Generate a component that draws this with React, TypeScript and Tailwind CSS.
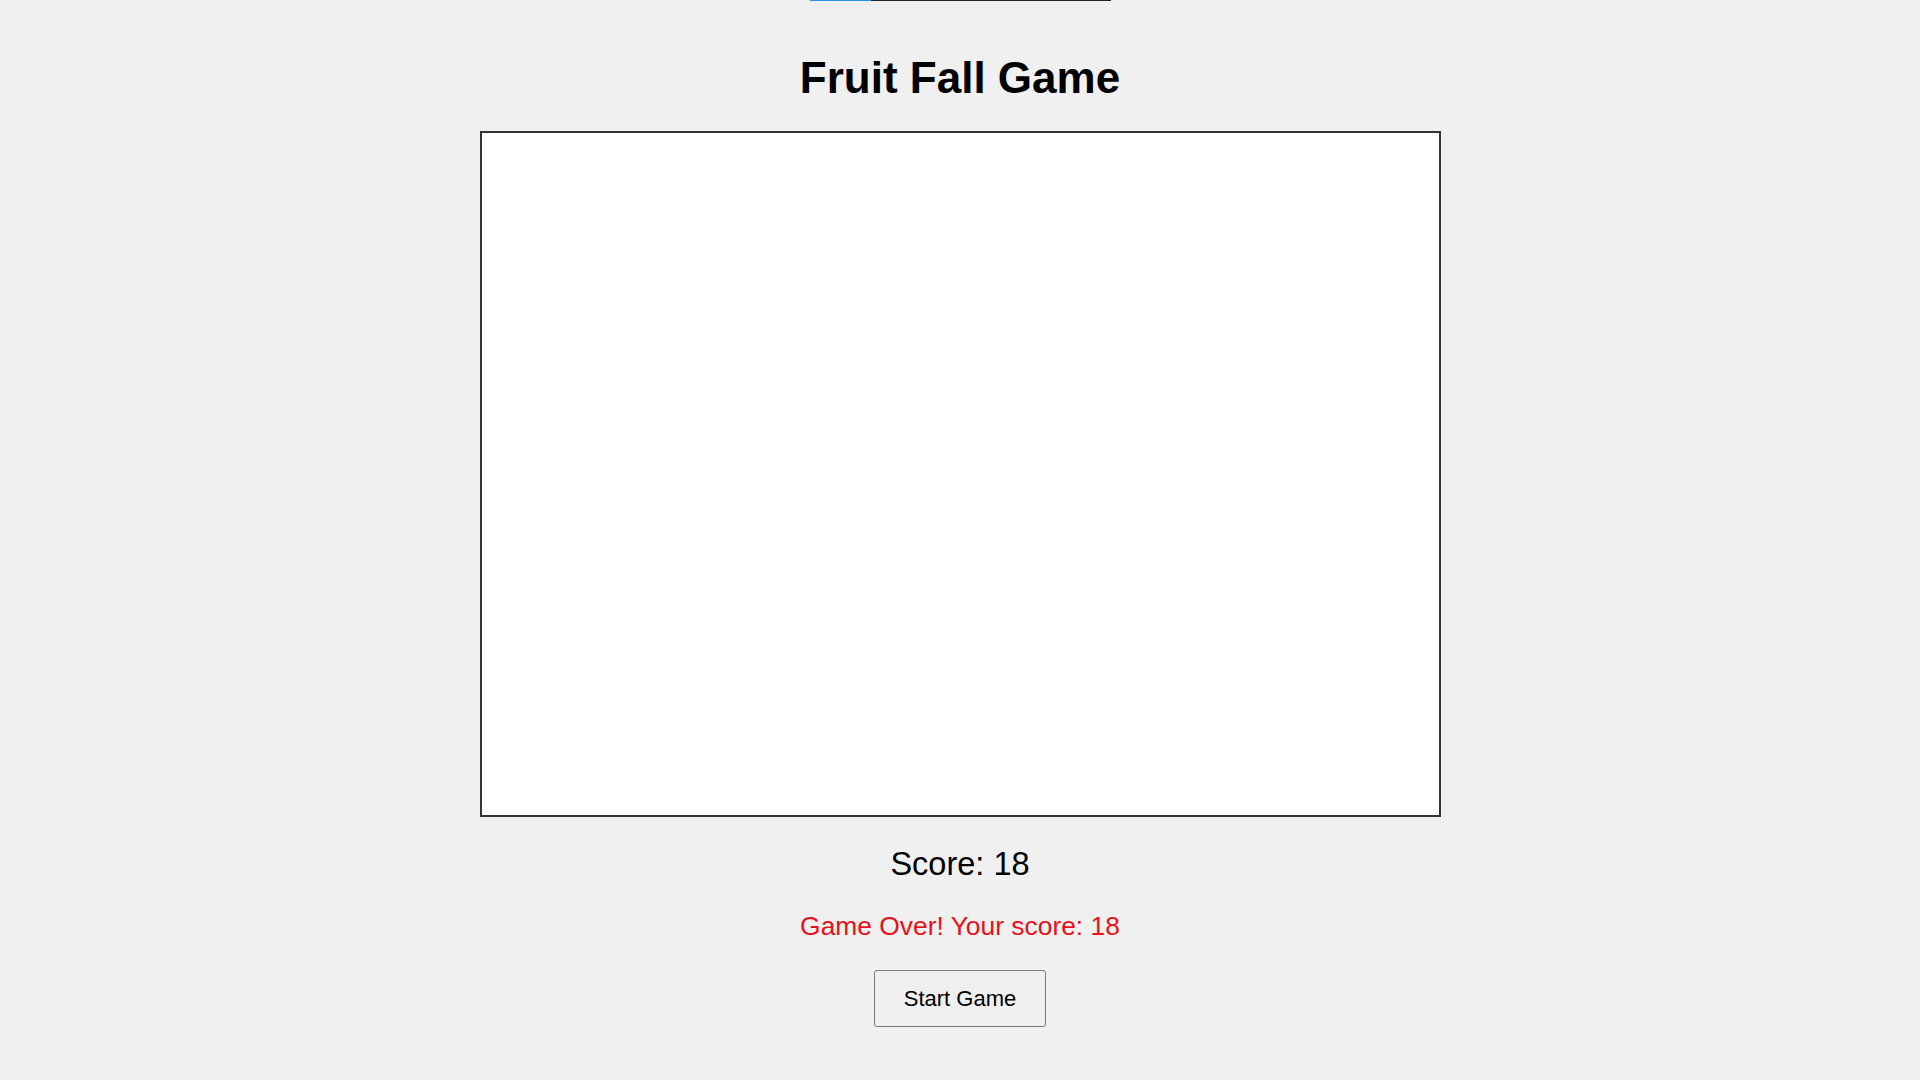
export default function App() {
  return (
    <div
      className="min-h-screen w-full bg-[#f0f0f0] flex flex-col items-center text-black"
      style={{ fontFamily: '"Liberation Sans", Arial, sans-serif' }}
    >
      {/* progress strip, mostly scrolled away */}
      <div className="flex w-[301px] h-px">
        <div className="w-[61px] bg-[#2196f3]" />
        <div className="flex-1 bg-[#222]" />
      </div>

      <h1 className="mt-[52px] text-[44px] leading-[50px] font-bold">Fruit Fall Game</h1>

      <div className="mt-[28px] w-[961px] h-[686px] bg-white border-2 border-[#333]" />

      <div className="mt-[29px] text-[32.5px] leading-[37px]">Score: 18</div>

      <div className="mt-[28px] text-[26.4px] leading-[30px] text-[#e8101a]">Game Over! Your score: 18</div>

      <button className="mt-[29px] h-[57px] px-[29px] text-[22px] bg-[#efefef] border border-[#7a7a7a] rounded-[3px] text-black">
        Start Game
      </button>
    </div>
  );
}
